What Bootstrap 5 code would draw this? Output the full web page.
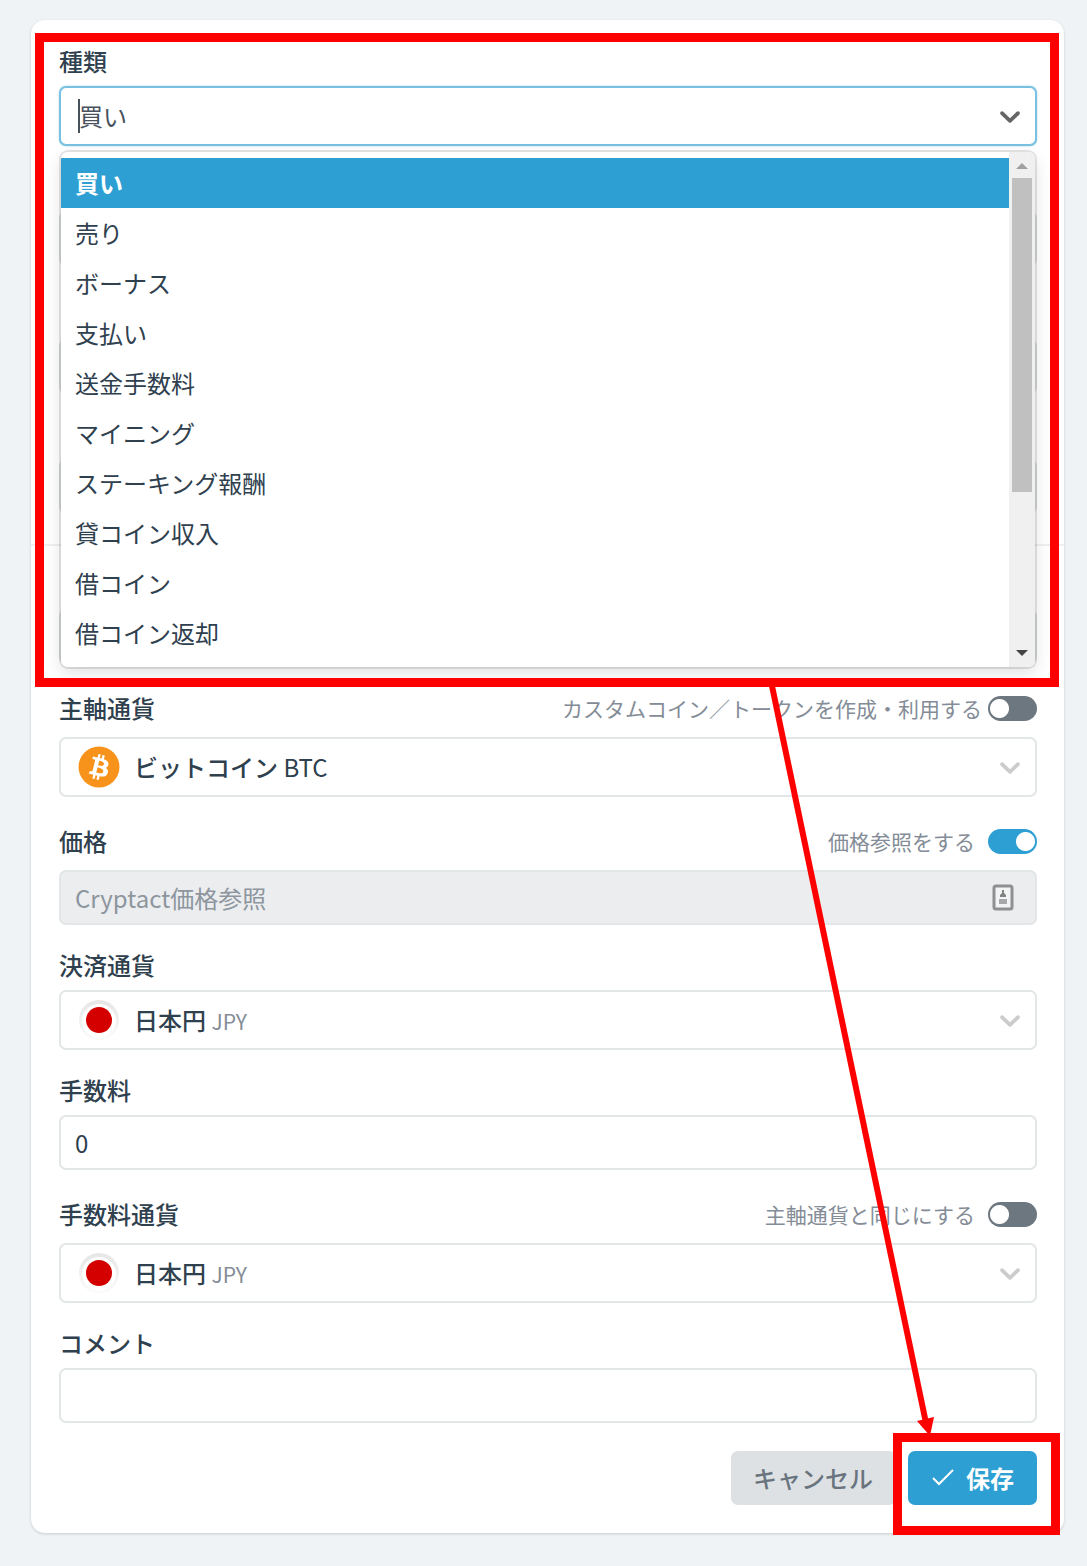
<!DOCTYPE html>
<html lang="ja">
<head>
<meta charset="utf-8">
<meta name="viewport" content="width=device-width, initial-scale=1">
<title>取引の追加</title>
<link href="https://cdn.jsdelivr.net/npm/bootstrap@5.3.0/dist/css/bootstrap.min.css" rel="stylesheet">
<style>
  :root { --accent: #2e9fd3; --ink: #2f404e; --line: #e2e6e7; --soft: #848c97; }
  body { background: #eff3f6; color: var(--ink); font-family: "Noto Sans CJK JP", "Noto Sans", sans-serif; font-size: 24px; line-height: 36px; padding: 20px 23px 33px 31px; }
  .trade-card { background: #fff; border-radius: 14px; padding: 23px 27px 28px 28px; box-shadow: 0 1px 3px rgba(0,0,0,.16); }
  .field { margin-bottom: 22px; }
  .field-head { min-height: 36px; margin-bottom: 7px; }
  .field-head.with-switch { min-height: 44px; }
  .field-head > label { font-weight: 500; }
  .box { border: 2px solid var(--line); border-radius: 7px; background: #fff; color: var(--ink); font-size: 24px; line-height: 36px; padding: 0 14px; height: 55px; width: 100%; }
  .box:disabled { background: #ebedef; color: var(--soft); }
  .box::placeholder { color: #8d959e; opacity: 1; }
  .pick { height: 60px; padding: 0 8px 0 17px; text-align: left; }
  .pick input { border: 0; outline: 0; padding: 0; background: transparent; color: #47525d; min-width: 0; }
  .pick.is-open { border-color: #7ac0e0; box-shadow: 0 0 2px #9bd0e8; }
  .caret { width: 2px; height: 34px; background: #47525d; margin-right: -1px; }
  .chev { width: 34px; height: 34px; fill: #ccc; }
  .is-open .chev { fill: #666; }
  .coin { width: 42px; height: 42px; margin-right: 14px; }
  .pick .coin-name { font-weight: 500; }
  .code { font-size: 21px; color: var(--soft); }
  .section-line { height: 2px; background: #edeff0; margin: 30px -27px 20px -28px; }

  .type-menu, .menu-shade { position: absolute; top: 109px; left: 2px; right: 2px; height: 515px; border-radius: 7px; }
  .type-menu { z-index: 3; background: #fff; overflow: hidden; }
  .menu-shade { z-index: 2; box-shadow: 0 0 0 2px rgba(0,0,0,.1), 0 6px 17px rgba(0,0,0,.12); }
  .type-menu .list { padding-top: 6px; }
  .opt { border: 0; background: none; color: var(--ink); text-align: left; height: 50px; padding: 0 14px; display: block; width: 100%; }
  .opt.active { background: var(--accent); color: #fff; font-weight: 700; }
  .rail { width: 26px; background: #f0f0f0; padding: 11px 3px; }
  .rail .thumb { height: 314px; background: #c0c0c0; margin-top: 9px; }
  .rail svg { width: 12px; height: 6px; }

  .opt-switch { gap: 6px; font-size: 21px; color: var(--soft); line-height: 32px; }
  .opt-switch.roomy { gap: 13px; }
  .opt-switch .form-check-input, .opt-switch .form-check-input:checked { width: 49px; height: 25px; border: 0; border-radius: 13px; margin: 0; float: none; background-color: #6d7780; background-image: radial-gradient(circle, #fff 9px, transparent 10px); background-size: 23px 25px; background-repeat: no-repeat; }
  .opt-switch .form-check-input { background-position: left center; }
  .opt-switch .form-check-input:checked { background-color: var(--accent); background-position: right center; }

  .ref-icon { position: absolute; right: 23px; top: 14px; width: 22px; height: 27px; }
  .act { border: 0; border-radius: 7px; height: 54px; font-size: 24px; line-height: 36px; padding: 0 23px 0 22px; font-weight: 500; }
  .act-cancel, .act-cancel:hover { background: #dde1e4; color: #69747e; }
  .act-save, .act-save:hover { background: var(--accent); color: #fff; font-weight: 700; padding: 0 23px 0 24px; }

  .frame { position: absolute; border: 9px solid #f00; z-index: 5; pointer-events: none; }
  .frame-type { top: -10px; left: -24px; right: -22px; bottom: -23px; }
  .frame-save { top: -18px; left: -15px; right: -23px; bottom: -30px; }
  .pointer { position: absolute; right: 120px; bottom: 97px; width: 180px; height: 750px; z-index: 4; pointer-events: none; }
</style>
<script src="https://cdn.jsdelivr.net/npm/bootstrap@5.3.0/dist/js/bootstrap.bundle.min.js"></script>
</head>
<body>
<svg width="0" height="0" class="position-absolute" aria-hidden="true">
  <symbol id="chevron" viewBox="0 0 20 20"><path d="M4.516 7.548c.436-.446 1.043-.481 1.576 0L10 11.295l3.908-3.747c.533-.481 1.141-.446 1.574 0 .436.445.408 1.197 0 1.615-.406.418-4.695 4.502-4.695 4.502-.217.223-.502.335-.787.335s-.57-.112-.789-.335c0 0-4.287-4.084-4.695-4.502s-.436-1.17 0-1.615z"/></symbol>
  <symbol id="jpy" viewBox="0 0 42 42">
    <linearGradient id="rim" x1="0" y1="0" x2="0" y2="1"><stop offset="0" stop-color="#e6e6e6"/><stop offset="1" stop-color="#fbfbfb"/></linearGradient>
    <circle cx="21" cy="21" r="20" fill="url(#rim)"/><circle cx="21" cy="22" r="17" fill="#fff"/><circle cx="21" cy="21" r="13" fill="#d40000"/>
  </symbol>
  <symbol id="btc" viewBox="0 0 32 32">
    <circle cx="16" cy="16" r="15.6" fill="#f7931a"/>
    <path fill="#fff" d="M23.189 14.02c.314-2.096-1.283-3.223-3.465-3.975l.708-2.84-1.728-.43-.69 2.765c-.454-.114-.92-.22-1.385-.326l.695-2.783L15.596 6l-.708 2.839c-.376-.086-.746-.17-1.104-.26l.002-.009-2.384-.595-.46 1.846s1.283.294 1.256.312c.7.175.826.638.805 1.006l-.806 3.235c.048.012.11.03.18.057l-.183-.045-1.13 4.532c-.086.212-.303.531-.793.41.018.025-1.256-.313-1.256-.313l-.858 1.978 2.25.561c.418.105.828.215 1.231.318l-.715 2.872 1.727.43.708-2.84c.472.127.93.245 1.378.357l-.706 2.828 1.728.43.715-2.866c2.948.558 5.164.333 6.097-2.333.752-2.146-.037-3.385-1.588-4.192 1.13-.26 1.98-1.003 2.207-2.538zm-3.95 5.538c-.533 2.147-4.148.986-5.32.695l.95-3.805c1.172.293 4.929.872 4.37 3.11zm.535-5.569c-.487 1.953-3.495.96-4.47.717l.86-3.45c.975.243 4.118.696 3.61 2.733z"/>
  </symbol>
</svg>

<main class="trade-card position-relative">
  <form autocomplete="off">
    <div class="position-relative">
      <div class="field">
        <div class="field-head d-flex align-items-center"><label for="kind">種類</label></div>
        <div class="box pick is-open d-flex align-items-center">
          <span class="caret"></span>
          <input id="kind" class="flex-grow-1" type="text" role="combobox" aria-expanded="true" aria-controls="kind-list" value="買い">
          <svg class="chev" aria-hidden="true"><use href="#chevron"/></svg>
        </div>
      </div>
      <div class="menu-shade"></div>
      <div id="kind-list" class="type-menu d-flex">
        <div class="list flex-grow-1" role="listbox" aria-label="種類">
          <button type="button" class="opt active" role="option" aria-selected="true">買い</button>
          <button type="button" class="opt" role="option">売り</button>
          <button type="button" class="opt" role="option">ボーナス</button>
          <button type="button" class="opt" role="option">支払い</button>
          <button type="button" class="opt" role="option">送金手数料</button>
          <button type="button" class="opt" role="option">マイニング</button>
          <button type="button" class="opt" role="option">ステーキング報酬</button>
          <button type="button" class="opt" role="option">貸コイン収入</button>
          <button type="button" class="opt" role="option">借コイン</button>
          <button type="button" class="opt" role="option">借コイン返却</button>
        </div>
        <div class="rail d-flex flex-column align-items-center" aria-hidden="true">
          <svg viewBox="0 0 12 6"><path d="M6 0l6 6H0z" fill="#a0a0a0"/></svg>
          <div class="thumb w-100"></div>
          <svg class="mt-auto" viewBox="0 0 12 6"><path d="M6 6l6-6H0z" fill="#444"/></svg>
        </div>
      </div>

      <div class="field"><div class="field-head"></div><input class="box d-block" type="text" aria-label="日時"></div>
      <div class="field"><div class="field-head with-switch"></div><input class="box d-block" type="text" aria-label="取引所"></div>
      <div class="field"><div class="field-head"></div><input class="box d-block" type="text" aria-label="口座"></div>
      <div class="section-line"></div>
      <div class="field"><div class="field-head"></div><input class="box d-block" type="text" aria-label="取引量"></div>
      <div class="frame frame-type"></div>
    </div>

    <div class="field">
      <div class="field-head with-switch d-flex align-items-center justify-content-between">
        <label for="base">主軸通貨</label>
        <div class="opt-switch form-switch d-flex align-items-center p-0">
          <label for="custom">カスタムコイン／トークンを作成・利用する</label>
          <input id="custom" class="form-check-input" type="checkbox" role="switch">
        </div>
      </div>
      <button id="base" type="button" class="box pick d-flex align-items-center" aria-haspopup="listbox">
        <svg class="coin" aria-hidden="true"><use href="#btc"/></svg>
        <span class="flex-grow-1"><span class="coin-name">ビットコイン</span> BTC</span>
        <svg class="chev" aria-hidden="true"><use href="#chevron"/></svg>
      </button>
    </div>

    <div class="field">
      <div class="field-head with-switch d-flex align-items-center justify-content-between">
        <label for="price">価格</label>
        <div class="opt-switch roomy form-switch d-flex align-items-center p-0">
          <label for="lookup">価格参照をする</label>
          <input id="lookup" class="form-check-input" type="checkbox" role="switch" checked>
        </div>
      </div>
      <div class="position-relative">
        <input id="price" class="box d-block" type="text" placeholder="Cryptact価格参照" disabled>
        <svg class="ref-icon" viewBox="0 0 22 27" aria-hidden="true">
          <rect x="2" y="2" width="18" height="23" rx="2" fill="#f3f4f4" stroke="#8e9091" stroke-width="3"/>
          <path d="M10 6h2v3l2 2v2H8v-2l2-2z" fill="#808283"/>
          <path d="M7 15h8v5H7z" fill="#a6a8a9"/>
        </svg>
      </div>
    </div>

    <div class="field">
      <div class="field-head d-flex align-items-center"><label for="quote">決済通貨</label></div>
      <button id="quote" type="button" class="box pick d-flex align-items-center" aria-haspopup="listbox">
        <svg class="coin" aria-hidden="true"><use href="#jpy"/></svg>
        <span class="flex-grow-1"><span class="coin-name">日本円</span> <span class="code">JPY</span></span>
        <svg class="chev" aria-hidden="true"><use href="#chevron"/></svg>
      </button>
    </div>

    <div class="field">
      <div class="field-head d-flex align-items-center"><label for="fee">手数料</label></div>
      <input id="fee" class="box d-block" type="text" value="0">
    </div>

    <div class="field">
      <div class="field-head with-switch d-flex align-items-center justify-content-between">
        <label for="feecoin">手数料通貨</label>
        <div class="opt-switch roomy form-switch d-flex align-items-center p-0">
          <label for="same">主軸通貨と同じにする</label>
          <input id="same" class="form-check-input" type="checkbox" role="switch">
        </div>
      </div>
      <button id="feecoin" type="button" class="box pick d-flex align-items-center" aria-haspopup="listbox">
        <svg class="coin" aria-hidden="true"><use href="#jpy"/></svg>
        <span class="flex-grow-1"><span class="coin-name">日本円</span> <span class="code">JPY</span></span>
        <svg class="chev" aria-hidden="true"><use href="#chevron"/></svg>
      </button>
    </div>

    <div class="field">
      <div class="field-head d-flex align-items-center"><label for="memo">コメント</label></div>
      <input id="memo" class="box d-block" type="text">
    </div>

    <div class="d-flex justify-content-end pt-1 mt-4">
      <button type="button" class="btn act act-cancel me-2">キャンセル</button>
      <div class="position-relative ms-1">
        <button type="submit" class="btn act act-save d-flex align-items-center">
          <svg width="22" height="18" viewBox="0 0 22 18" class="me-2" fill="none" stroke="#fff" stroke-width="2" aria-hidden="true"><path d="M1 9l6 6L21 1"/></svg>
          <span class="ps-1">保存</span>
        </button>
        <div class="frame frame-save"></div>
      </div>
    </div>
  </form>
  <svg class="pointer" viewBox="0 0 180 750" aria-hidden="true">
    <path d="M8 0L162 737" stroke="#f00" stroke-width="6"/>
    <path d="M153 735l17-4-4 19z" fill="#f00"/>
  </svg>
</main>
</body>
</html>
